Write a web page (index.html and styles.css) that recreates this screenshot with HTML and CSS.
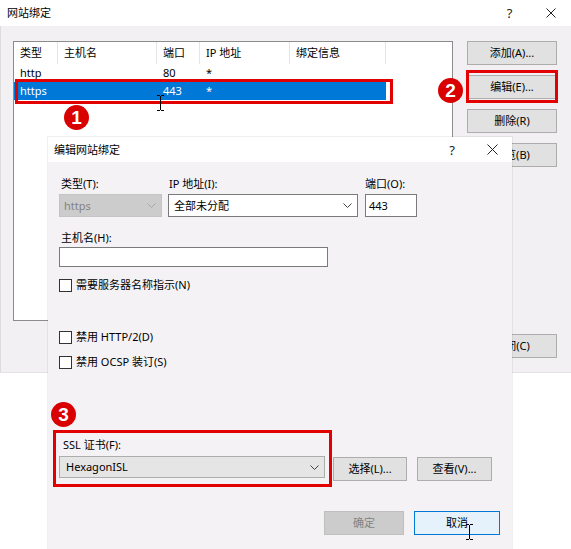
FILE: index.html
```html
<!DOCTYPE html>
<html>
<head>
<meta charset="utf-8">
<link rel="stylesheet" href="styles.css">
</head>
<body>
<div class="screen">
  <div class="dlg outer">
    <div class="titlebar">
      <span class="title">网站绑定</span>
      <span class="caption">
        <span class="cap help">?</span>
        <span class="cap"><svg class="x" width="10" height="10" viewBox="0 0 10 10"><path d="M0.5 0.5L9.5 9.5M9.5 0.5L0.5 9.5" stroke="#222" stroke-width="1" fill="none"/></svg></span>
      </span>
    </div>
    <div class="outer-body">
      <div class="list">
        <div class="lrow head">
          <div class="c c1">类型</div><div class="c c2">主机名</div><div class="c c3">端口</div><div class="c c4">IP 地址</div><div class="c c5">绑定信息</div>
        </div>
        <div class="lrow">
          <div class="c c1">http</div><div class="c c2"></div><div class="c c3">80</div><div class="c c4">*</div><div class="c c5"></div>
        </div>
        <div class="lrow sel">
          <div class="c c1">https</div><div class="c c2"></div><div class="c c3">443</div><div class="c c4">*</div><div class="c c5"></div>
        </div>
      </div>
      <div class="btncol">
        <button class="btn">添加(A)...</button>
        <button class="btn">编辑(E)...</button>
        <button class="btn">删除(R)</button>
        <button class="btn">浏览(B)</button>
        <button class="btn btn-close">关闭(C)</button>
      </div>
    </div>
  </div>

  <div class="mark mark1"></div>
  <div class="mark mark2"></div>
  <div class="badge badge1">1</div>
  <div class="badge badge2">2</div>
  <svg class="ibeam ibeam1" width="7" height="16" viewBox="0 0 7 16"><path d="M0 0.5H3M4 0.5H7M3.5 1V15M0 15.5H3M4 15.5H7" stroke="#000" stroke-width="1" fill="none"/></svg>

  <div class="dlg inner">
    <div class="titlebar inner-tb">
      <span class="title">编辑网站绑定</span>
      <span class="caption">
        <span class="cap help">?</span>
        <span class="cap"><svg class="x" width="11" height="11" viewBox="0 0 11 11"><path d="M0.5 0.5L10.5 10.5M10.5 0.5L0.5 10.5" stroke="#222" stroke-width="1" fill="none"/></svg></span>
      </span>
    </div>
    <div class="inner-body">
      <div class="row1">
        <div class="field f-type">
          <div class="lbl">类型(T):</div>
          <div class="combo disabled"><span>https</span><svg class="chev" width="9" height="5" viewBox="0 0 9 5"><path d="M0.5 0.5L4.5 4.5L8.5 0.5" stroke="#a8a8a8" fill="none"/></svg></div>
        </div>
        <div class="field f-ip">
          <div class="lbl">IP 地址(I):</div>
          <div class="combo white"><span>全部未分配</span><svg class="chev" width="9" height="5" viewBox="0 0 9 5"><path d="M0.5 0.5L4.5 4.5L8.5 0.5" stroke="#444" fill="none"/></svg></div>
        </div>
        <div class="field f-port">
          <div class="lbl">端口(O):</div>
          <div class="input port">443</div>
        </div>
      </div>
      <div class="lbl host-lbl">主机名(H):</div>
      <div class="input host"></div>
      <div class="chk chk1"><span class="box"></span><span>需要服务器名称指示(N)</span></div>
      <div class="chk chk2"><span class="box"></span><span>禁用 HTTP/2(D)</span></div>
      <div class="chk chk3"><span class="box"></span><span>禁用 OCSP 装订(S)</span></div>
      <div class="ssl-row">
        <div class="ssl-group">
          <div class="lbl ssl-lbl">SSL 证书(F):</div>
          <div class="combo ssl"><span>HexagonISL</span><svg class="chev" width="9" height="5" viewBox="0 0 9 5"><path d="M0.5 0.5L4.5 4.5L8.5 0.5" stroke="#444" fill="none"/></svg></div>
        </div>
        <button class="btn btn-sel">选择(L)...</button>
        <button class="btn btn-view">查看(V)...</button>
      </div>
      <div class="footer">
        <button class="btn btn-ok" disabled>确定</button>
        <button class="btn btn-cancel">取消</button>
      </div>
    </div>
  </div>

  <div class="badge badge3">3</div>
  <svg class="ibeam ibeam2" width="7" height="16" viewBox="0 0 7 16"><path d="M0 0.5H3M4 0.5H7M3.5 1V15M0 15.5H3M4 15.5H7" stroke="#000" stroke-width="1" fill="none"/></svg>
</div>
</body>
</html>
```

FILE: styles.css
```css
* { box-sizing: border-box; }
html, body { margin: 0; padding: 0; background: #fff; }
body {
  font-family: "Noto Sans", "Noto Sans CJK SC", sans-serif;
  font-size: 11px;
  line-height: 14px;
  color: #000;
}
.screen {
  position: relative;
  width: 571px;
  height: 549px;
  overflow: hidden;
  background: #fff;
}

/* dialogs */
.dlg { display: flex; flex-direction: column; }
.outer { width: 571px; height: 373px; }
.titlebar {
  display: flex;
  align-items: center;
  justify-content: space-between;
  height: 26px;
  background: #fff;
  padding-left: 7px;
  flex: none;
}
.caption { display: flex; height: 100%; }
.cap {
  width: 41px;
  display: flex;
  align-items: center;
  justify-content: center;
  font-size: 13px;
  color: #222;
}
.outer-body {
  flex: 1;
  display: flex;
  gap: 14px;
  padding: 15px 0 0 12px;
  background: #f3f0f4;
  border-left: 1px solid #dcdcdc;
  border-bottom: 1px solid #e4e2e5;
}

/* list view */
.list {
  width: 440px;
  height: 280px;
  background: #fff;
  border: 1px solid #8c8c8c;
}
.lrow { display: flex; height: 18px; align-items: center; width: 372px; }
.lrow.head { height: 22px; width: 100%; }
.c { height: 100%; display: flex; align-items: center; padding-left: 6px; white-space: nowrap; }
.head .c { border-right: 1px solid #e5e5e5; }
.c1 { width: 44px; }
.c2 { width: 99px; }
.c3 { width: 43px; }
.c4 { width: 90px; }
.c5 { width: 96px; }
.lrow.sel { background: #0078d7; color: #fff; }

/* buttons */
.btncol { display: flex; flex-direction: column; gap: 10px; width: 90px; }
.btn {
  height: 24px;
  width: 90px;
  padding: 0;
  font: inherit;
  color: #000;
  background: #e1e1e1;
  border: 1px solid #adadad;
  border-radius: 0;
  white-space: nowrap;
}
.btn-close { margin-top: 157px; }

/* annotations */
.mark { position: absolute; border: 3px solid #e30000; }
.mark1 { left: 15px; top: 79px; width: 378px; height: 25px; }
.mark2 { left: 466px; top: 70px; width: 92px; height: 33px; }
.badge {
  position: absolute;
  width: 25px;
  height: 25px;
  border-radius: 50%;
  background: #d90000;
  color: #fff;
  font-family: "Liberation Sans", Arial, sans-serif;
  font-weight: bold;
  font-size: 19px;
  line-height: 25px;
  text-align: center;
}
.badge1 { left: 64px; top: 105px; }
.badge2 { left: 438px; top: 78px; }
.badge3 { left: 51px; top: 402px; }
.ibeam { position: absolute; }
.ibeam1 { left: 157px; top: 95px; }
.ibeam2 { left: 466px; top: 524px; }

/* inner dialog */
.inner {
  position: absolute;
  left: 48px;
  top: 137px;
  width: 464px;
  height: 412px;
  box-shadow: 0 0 0 1px rgba(0,0,0,0.06);
}
.inner-tb { height: 25px; padding-left: 6px; }
.inner-tb .cap { width: 40px; }
.inner-body {
  flex: 1;
  background: #f5f2f6;
  padding: 15px 12px 0 11px;
  display: flex;
  flex-direction: column;
  align-items: flex-start;
}
.row1 { display: flex; gap: 6px; }
.field { display: flex; flex-direction: column; gap: 3px; }
.f-port { margin-left: 1px; }
.lbl { padding-left: 2px; white-space: nowrap; }
.f-ip .lbl { padding-left: 1px; }
.f-port .lbl { padding-left: 0; }
.combo {
  position: relative;
  height: 23px;
  display: flex;
  align-items: center;
  padding-left: 5px;
  border: 1px solid #7a7a7a;
  background: #fff;
}
.combo .chev { position: absolute; right: 5px; top: 8px; }
.combo.disabled { width: 103px; background: #cccccc; border-color: #c4c4c4; color: #838383; padding-left: 4px; }
.combo.white { width: 190px; }
.input {
  height: 23px;
  border: 1px solid #7a7a7a;
  background: #fff;
  display: flex;
  align-items: center;
  padding-left: 3px;
}
.port { width: 52px; }
.host-lbl { margin-top: 14px; }
.host { width: 269px; height: 20px; margin-top: 2px; }
.chk { display: flex; align-items: center; gap: 4px; height: 14px; white-space: nowrap; }
.chk .box { width: 13px; height: 13px; border: 1px solid #333; background: #fff; flex: none; }
.chk1 { margin-top: 11px; }
.chk2 { margin-top: 38px; }
.chk3 { margin-top: 11px; }

.ssl-row { display: flex; margin-top: 61px; margin-left: -6px; align-items: flex-start; }
.ssl-group {
  width: 279px;
  border: 3px solid #e30000;
  padding: 5px 4px 6px 3px;
  display: flex;
  flex-direction: column;
  gap: 4px;
}
.ssl-lbl { padding-left: 4px; }
.combo.ssl { width: 266px; height: 22px; background: #e5e5e5; border-color: #adadad; padding-left: 6px; }
.btn-sel { width: 74px; margin-top: 27px; margin-left: 1px; }
.btn-view { width: 75px; margin-top: 27px; margin-left: 10px; }

.footer { align-self: flex-end; display: flex; gap: 10px; margin-top: 24px; }
.btn-ok { width: 80px; background: #cccccc; border-color: #bfbfbf; color: #838383; }
.btn-cancel { width: 86px; background: #e5f1fb; border-color: #0078d7; }
```
